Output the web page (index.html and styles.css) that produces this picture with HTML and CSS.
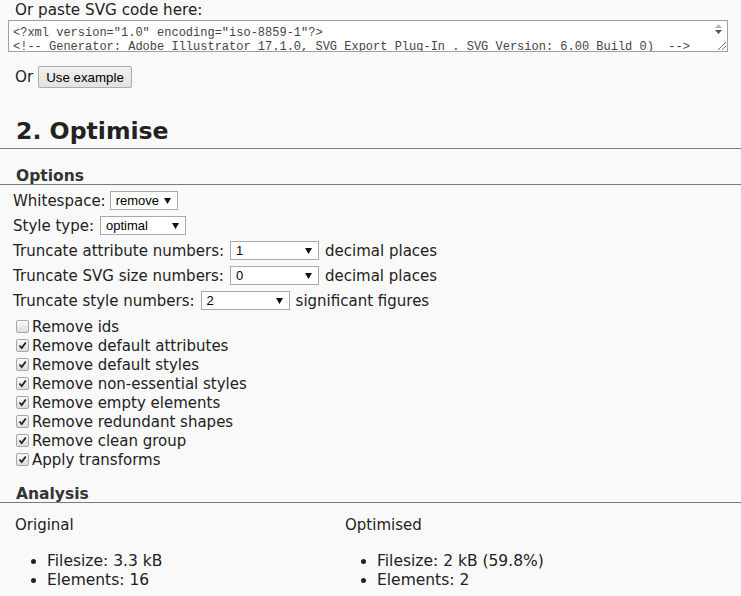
FILE: index.html
```html
<!DOCTYPE html>
<html>
<head>
<meta charset="utf-8">
<link rel="stylesheet" href="styles.css">
</head>
<body>
<div class="page">
  <div class="paste-label">Or paste SVG code here:</div>
  <div class="code">
    <div class="code-text">
      <div class="code-line">&lt;?xml version="1.0" encoding="iso-8859-1"?&gt;</div>
      <div class="code-line">&lt;!-- Generator: Adobe Illustrator 17.1.0, SVG Export Plug-In . SVG Version: 6.00 Build 0)  --&gt;</div>
    </div>
    <div class="scrollbar">
      <svg class="spin" width="9" height="12" viewBox="0 0 9 12"><path d="M4.5 1 L8 5 L1 5 Z" fill="#b8b8b8"/><path d="M1 7 L8 7 L4.5 11 Z" fill="#555"/></svg>
      <svg class="grip" width="12" height="12" viewBox="0 0 12 12"><path d="M11 3 L3 11 M11 7 L7 11" stroke="#777" stroke-width="1"/></svg>
    </div>
  </div>
  <div class="or-row"><span>Or</span><span class="btn">Use example</span></div>

  <h2 class="h-main">2. Optimise</h2>

  <h3 class="h-sub">Options</h3>
  <div class="opt-row ws-row">Whitespace:<span class="sel w-ws"><span>remove</span><svg width="7" height="6" viewBox="0 0 7 6"><path d="M0 0 H7 L3.5 6 Z" fill="#111"/></svg></span></div>
  <div class="opt-row">Style type:<span class="sel w-st"><span>optimal</span><svg width="7" height="6" viewBox="0 0 7 6"><path d="M0 0 H7 L3.5 6 Z" fill="#111"/></svg></span></div>
  <div class="opt-row">Truncate attribute numbers:<span class="sel w-num"><span>1</span><svg width="7" height="6" viewBox="0 0 7 6"><path d="M0 0 H7 L3.5 6 Z" fill="#111"/></svg></span>decimal places</div>
  <div class="opt-row">Truncate SVG size numbers:<span class="sel w-num"><span>0</span><svg width="7" height="6" viewBox="0 0 7 6"><path d="M0 0 H7 L3.5 6 Z" fill="#111"/></svg></span>decimal places</div>
  <div class="opt-row">Truncate style numbers:<span class="sel w-num"><span>2</span><svg width="7" height="6" viewBox="0 0 7 6"><path d="M0 0 H7 L3.5 6 Z" fill="#111"/></svg></span>significant figures</div>

  <div class="checks">
    <div class="chk-row"><span class="box"></span>Remove ids</div>
    <div class="chk-row"><span class="box"><svg width="9" height="9" viewBox="0 0 9 9"><path d="M1.5 4.5 L3.7 7 L7.8 1.5" fill="none" stroke="#222" stroke-width="1.8"/></svg></span>Remove default attributes</div>
    <div class="chk-row"><span class="box"><svg width="9" height="9" viewBox="0 0 9 9"><path d="M1.5 4.5 L3.7 7 L7.8 1.5" fill="none" stroke="#222" stroke-width="1.8"/></svg></span>Remove default styles</div>
    <div class="chk-row"><span class="box"><svg width="9" height="9" viewBox="0 0 9 9"><path d="M1.5 4.5 L3.7 7 L7.8 1.5" fill="none" stroke="#222" stroke-width="1.8"/></svg></span>Remove non-essential styles</div>
    <div class="chk-row"><span class="box"><svg width="9" height="9" viewBox="0 0 9 9"><path d="M1.5 4.5 L3.7 7 L7.8 1.5" fill="none" stroke="#222" stroke-width="1.8"/></svg></span>Remove empty elements</div>
    <div class="chk-row"><span class="box"><svg width="9" height="9" viewBox="0 0 9 9"><path d="M1.5 4.5 L3.7 7 L7.8 1.5" fill="none" stroke="#222" stroke-width="1.8"/></svg></span>Remove redundant shapes</div>
    <div class="chk-row"><span class="box"><svg width="9" height="9" viewBox="0 0 9 9"><path d="M1.5 4.5 L3.7 7 L7.8 1.5" fill="none" stroke="#222" stroke-width="1.8"/></svg></span>Remove clean group</div>
    <div class="chk-row"><span class="box"><svg width="9" height="9" viewBox="0 0 9 9"><path d="M1.5 4.5 L3.7 7 L7.8 1.5" fill="none" stroke="#222" stroke-width="1.8"/></svg></span>Apply transforms</div>
  </div>

  <h3 class="h-sub h-analysis">Analysis</h3>
  <div class="analysis">
    <div class="col">
      <div class="col-title">Original</div>
      <ul class="stats">
        <li>Filesize: 3.3 kB</li>
        <li>Elements: 16</li>
      </ul>
    </div>
    <div class="col">
      <div class="col-title">Optimised</div>
      <ul class="stats">
        <li>Filesize: 2 kB (59.8%)</li>
        <li>Elements: 2</li>
      </ul>
    </div>
  </div>
</div>
</body>
</html>
```

FILE: styles.css
```css
html, body {
  margin: 0;
  padding: 0;
  background: #f9f9f9;
}
body {
  font-family: "DejaVu Sans", Verdana, sans-serif;
  font-size: 15px;
  color: #222;
  overflow: hidden;
}
.page {
  width: 741px;
}
.paste-label {
  height: 20px;
  line-height: 20px;
  padding-left: 15px;
  font-size: 15.2px;
}
.code {
  margin-left: 8px;
  width: 720px;
  height: 32px;
  box-sizing: border-box;
  border: 1px solid #a0a0a0;
  background: #fff;
  display: flex;
  overflow: hidden;
}
.code-text {
  flex: 1;
  min-width: 0;
  padding: 5px 0 0 4px;
  font-family: "Liberation Mono", "Courier New", monospace;
  font-size: 12px;
  line-height: 14px;
  color: #444;
  overflow: hidden;
}
.code-line {
  white-space: pre;
  height: 14px;
}
.scrollbar {
  width: 17px;
  flex: none;
  display: flex;
  flex-direction: column;
  align-items: center;
  justify-content: space-between;
  padding: 2px 0 0;
  box-sizing: border-box;
}
.scrollbar .grip {
  align-self: flex-end;
}
.or-row {
  margin-top: 14px;
  height: 22px;
  padding-left: 15px;
  display: flex;
  align-items: center;
  gap: 5px;
  font-size: 15.2px;
}
.btn {
  height: 22px;
  box-sizing: border-box;
  padding: 0 7px;
  display: inline-flex;
  align-items: center;
  border: 1px solid #adadad;
  border-radius: 2px;
  background: linear-gradient(#f0f0f0, #e2e2e2);
  font-family: "Liberation Sans", Arial, sans-serif;
  font-size: 13.3px;
  color: #000;
}
.h-main {
  margin: 22px 0 0;
  height: 38px;
  padding-left: 16px;
  font-size: 23.6px;
  line-height: 43px;
  font-weight: bold;
  color: #222;
  border-bottom: 1px solid #7a7a7a;
  overflow: hidden;
}
.h-sub {
  margin: 0;
  padding-left: 16px;
  font-size: 15.5px;
  font-weight: bold;
  color: #333;
  border-bottom: 1px solid #7a7a7a;
}
.h-main + .h-sub {
  margin-top: 14px;
  height: 21px;
  line-height: 26px;
}
.opt-row {
  height: 24.9px;
  display: flex;
  align-items: center;
  padding-left: 13px;
  gap: 6px;
}
.ws-row {
  gap: 4px;
}
.h-sub + .opt-row {
  margin-top: 3.5px;
}
.sel {
  height: 19px;
  box-sizing: border-box;
  border: 1px solid #a9a9a9;
  background: #fff;
  display: inline-flex;
  align-items: center;
  justify-content: space-between;
  padding: 0 6px 0 5px;
  font-family: "Liberation Sans", Arial, sans-serif;
  font-size: 13px;
  color: #000;
}
.w-ws { width: 68px; }
.w-st { width: 86px; }
.w-num { width: 89px; }
.checks {
  margin-top: 4.5px;
  padding-left: 16px;
}
.chk-row {
  height: 19px;
  display: flex;
  align-items: center;
  gap: 3px;
}
.box {
  width: 13px;
  height: 13px;
  box-sizing: border-box;
  border: 1px solid #a6a6a6;
  border-radius: 2px;
  background: linear-gradient(#fafafa, #dcdcdc);
  display: inline-flex;
  align-items: center;
  justify-content: center;
}
.h-analysis {
  margin-top: 12px;
  height: 21px;
  line-height: 26px;
}
.analysis {
  display: grid;
  grid-template-columns: 330px 1fr;
  padding-left: 15px;
  margin-top: 12px;
  font-size: 15.5px;
}
.col-title {
  height: 20px;
  line-height: 20px;
  font-size: 15px;
}
.stats {
  margin: 17px 0 0;
  padding-left: 32px;
  list-style: disc;
}
.stats li {
  height: 19px;
  line-height: 19px;
}
```
